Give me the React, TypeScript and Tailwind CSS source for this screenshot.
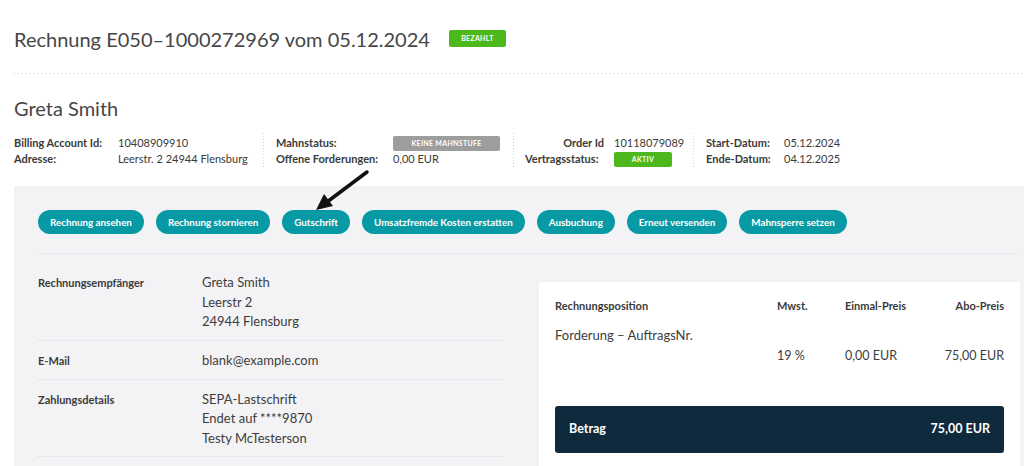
import React from "react";

const hDots = "h-px bg-[repeating-linear-gradient(to_right,#cfcfd3_0_1px,transparent_1px_4px)]";
const vDots = "w-px self-stretch bg-[repeating-linear-gradient(to_bottom,#d3d3d6_0_1px,transparent_1px_3px)]";

function Badge({ children, color, w }: { children: React.ReactNode; color: string; w: string }) {
  return (
    <span
      className={`inline-flex h-[15px] items-center justify-center rounded-[2px] text-[7px] font-bold uppercase tracking-[0.3px] text-white ${color} ${w}`}
    >
      {children}
    </span>
  );
}

const buttons = [
  "Rechnung ansehen",
  "Rechnung stornieren",
  "Gutschrift",
  "Umsatzfremde Kosten erstatten",
  "Ausbuchung",
  "Erneut versenden",
  "Mahnsperre setzen",
];

function DetailRow({ label, lines, first }: { label: string; lines: string[]; first?: boolean }) {
  return (
    <div>
      <div className={`flex ${first ? "pt-[19px]" : "pt-[10px]"} pb-[8px]`}>
        <div className="w-[164px] shrink-0 text-[11px] font-bold leading-[20px] text-[#3a3a3a]">{label}</div>
        <div className="text-[13px] leading-[19.5px] text-[#3d3d3d]">
          {lines.map((l) => (
            <div key={l}>{l}</div>
          ))}
        </div>
      </div>
      <div className={hDots} />
    </div>
  );
}

export default function App() {
  return (
    <div className="relative h-[466px] w-[1024px] overflow-hidden bg-white font-['Lato',sans-serif] text-[#3a3a3a]">
      {/* Header */}
      <div className="pl-[14px]">
        <div className="flex h-[73px] items-start gap-[19px] pt-[27px]">
          <h1 className="text-[20px] font-normal leading-[24px] text-[#464646]">
            Rechnung E050–1000272969 vom 05.12.2024
          </h1>
          <span className="mt-[3px] inline-flex h-[17px] w-[57px] items-center justify-center rounded-[2px] bg-[#4cb81b] text-[7px] font-bold tracking-[0.3px] text-white">
            BEZAHLT
          </span>
        </div>
        <div className={hDots} />

        <h2 className="pt-[22px] text-[20px] font-normal leading-[24px] text-[#464646]">Greta Smith</h2>

        {/* Info */}
        <div className="mt-[13px] flex h-[36px] text-[11px] leading-[16px]">
          <div className="grid w-[249px] grid-cols-[104px_auto] content-center">
            <span className="font-bold">Billing Account Id:</span>
            <span>10408909910</span>
            <span className="font-bold">Adresse:</span>
            <span>Leerstr. 2 24944 Flensburg</span>
          </div>
          <div className={vDots} />
          <div className="grid w-[249px] grid-cols-[117px_107px] content-center pl-[12px]">
            <span className="font-bold">Mahnstatus:</span>
            <span className="flex items-center">
              <Badge color="bg-[#9d9d9d]" w="w-[107px]">Keine Mahnstufe</Badge>
            </span>
            <span className="font-bold">Offene Forderungen:</span>
            <span>0,00 EUR</span>
          </div>
          <div className={vDots} />
          <div className="grid w-[179px] grid-cols-[89px_auto] content-center pl-[11px]">
            <span className="pr-[10px] text-right font-bold">Order Id</span>
            <span>10118079089</span>
            <span className="font-bold">Vertragsstatus:</span>
            <span className="flex items-center">
              <Badge color="bg-[#4cb81b]" w="w-[58px]">Aktiv</Badge>
            </span>
          </div>
          <div className={vDots} />
          <div className="grid grid-cols-[78px_auto] content-center pl-[12px]">
            <span className="font-bold">Start-Datum:</span>
            <span>05.12.2024</span>
            <span className="font-bold">Ende-Datum:</span>
            <span>04.12.2025</span>
          </div>
        </div>

        {/* Panel */}
        <div className="mt-[17px] h-[300px] bg-[#f3f3f5] pl-[24px] pr-[4px] pt-[24px]">
          <div className="flex gap-[12px]">
            {buttons.map((b) => (
              <button
                key={b}
                className="h-[24px] rounded-full bg-[#089aa4] px-[12px] text-[9.8px] font-bold text-white"
              >
                {b}
              </button>
            ))}
          </div>
          <div className={`mt-[19px] ${hDots}`} />

          <div className="flex gap-[36px]">
            <div className="w-[465px]">
              <DetailRow first label="Rechnungsempfänger" lines={["Greta Smith", "Leerstr 2", "24944 Flensburg"]} />
              <DetailRow label="E-Mail" lines={["blank@example.com"]} />
              <DetailRow label="Zahlungsdetails" lines={["SEPA-Lastschrift", "Endet auf ****9870", "Testy McTesterson"]} />
            </div>

            <div className="mt-[28px] h-[200px] w-[481px] bg-white px-[16px] pt-[17px]">
              <div className="grid grid-cols-[222px_68px_90px_69px] text-[11px] font-bold leading-[14px] text-[#3a3a3a]">
                <span>Rechnungsposition</span>
                <span>Mwst.</span>
                <span>Einmal-Preis</span>
                <span className="text-right">Abo-Preis</span>
              </div>
              <div className="mt-[14px] text-[13px] leading-[16px] text-[#3d3d3d]">Forderung – AuftragsNr.</div>
              <div className="mt-[5px] grid grid-cols-[222px_68px_90px_69px] text-[12.5px] leading-[16px] text-[#3d3d3d]">
                <span />
                <span>19 %</span>
                <span>0,00 EUR</span>
                <span className="text-right">75,00 EUR</span>
              </div>
              <div className="mt-[42px] flex h-[47px] items-center justify-between rounded-[3px] bg-[#0f293d] px-[14px] text-[12.5px] font-bold text-white">
                <span>Betrag</span>
                <span>75,00 EUR</span>
              </div>
            </div>
          </div>
        </div>
      </div>

      {/* Arrow annotation */}
      <svg className="pointer-events-none absolute left-0 top-0" width="1024" height="466">
        <line x1="367" y1="172" x2="327" y2="202" stroke="#111" strokeWidth="3.5" strokeLinecap="round" />
        <polygon points="316,210 333,206 324,194" fill="#111" />
      </svg>
    </div>
  );
}
